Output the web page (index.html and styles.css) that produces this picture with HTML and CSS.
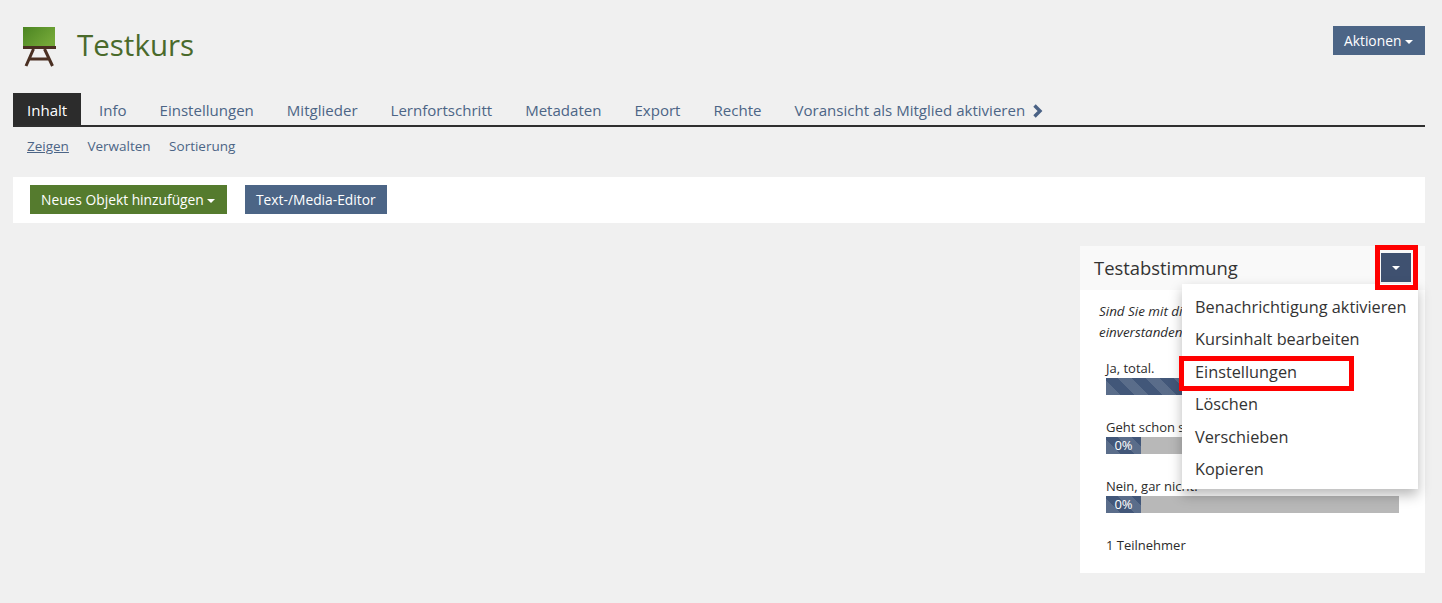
FILE: index.html
```html
<!DOCTYPE html>
<html lang="de">
<head>
<meta charset="utf-8">
<title>Testkurs</title>
<link rel="stylesheet" href="styles.css">
</head>
<body>
<div class="page">
  <header class="head">
    <div class="title-wrap">
      <svg class="course-icon" width="34" height="40" viewBox="0 0 34 40">
        <defs><linearGradient id="board" x1="0" y1="0" x2="1" y2="0.6"><stop offset="0" stop-color="#4b8422"/><stop offset="1" stop-color="#74a838"/></linearGradient></defs>
        <rect x="1" y="0" width="32" height="19" fill="url(#board)"/>
        <rect x="1" y="19" width="33" height="3" fill="#4a2f22"/>
        <path d="M11.500 22 L4 39 M22.500 22 L30.500 39 M7 32 H27" stroke="#4a2f22" stroke-width="3" fill="none"/>
      </svg>
      <h1 class="title">Testkurs</h1>
    </div>
    <a class="btn btn-blue btn-actions">Aktionen <span class="caret"></span></a>
  </header>

  <nav class="tabs">
    <a class="tab active">Inhalt</a>
    <a class="tab">Info</a>
    <a class="tab">Einstellungen</a>
    <a class="tab">Mitglieder</a>
    <a class="tab">Lernfortschritt</a>
    <a class="tab">Metadaten</a>
    <a class="tab">Export</a>
    <a class="tab">Rechte</a>
    <a class="tab">Voransicht als Mitglied aktivieren
      <svg class="chev" width="11" height="14" viewBox="0 0 11 14"><path d="M2.500 1.500 L8 7 L2.500 12.500" fill="none" stroke="#4a6285" stroke-width="3.400"/></svg>
    </a>
  </nav>
  <nav class="subtabs">
    <a class="sub current">Zeigen</a>
    <a class="sub">Verwalten</a>
    <a class="sub">Sortierung</a>
  </nav>

  <div class="toolbar">
    <a class="btn btn-green">Neues Objekt hinzufügen <span class="caret"></span></a>
    <a class="btn btn-blue">Text-/Media-Editor</a>
  </div>

  <div class="content">
    <section class="panel">
      <div class="panel-head">
        <h2 class="panel-title">Testabstimmung</h2>
        <a class="menu-toggle"><span class="caret"></span></a>
      </div>
      <div class="panel-body">
        <p class="question">Sind Sie mit diesem Kursinhalt<br>einverstanden?</p>
        <div class="answers">
          <div class="answer">
            <div class="answer-label">Ja, total.</div>
            <div class="bar"><div class="fill" style="width:100%">100%</div></div>
          </div>
          <div class="answer">
            <div class="answer-label">Geht schon so.</div>
            <div class="bar"><div class="fill" style="width:35px">0%</div></div>
          </div>
          <div class="answer">
            <div class="answer-label">Nein, gar nicht.</div>
            <div class="bar"><div class="fill" style="width:35px">0%</div></div>
          </div>
        </div>
        <p class="count">1 Teilnehmer</p>
      </div>
      <ul class="menu">
        <li>Benachrichtigung aktivieren</li>
        <li>Kursinhalt bearbeiten</li>
        <li>Einstellungen</li>
        <li>Löschen</li>
        <li>Verschieben</li>
        <li>Kopieren</li>
      </ul>
      <span class="mark mark-toggle"></span>
      <span class="mark mark-item"></span>
    </section>
  </div>
</div>
</body>
</html>
```
FILE: styles.css
```css
* { box-sizing: border-box; }
html, body { margin: 0; padding: 0; height: 100%; }
body {
  background: #f0f0f0;
  font-family: "Open Sans", "Noto Sans", sans-serif;
  color: #2b2b2b;
  overflow: hidden;
}
a { display: inline-block; }
.page { padding: 26px 17px 0 13px; }

.head { display: flex; justify-content: space-between; align-items: flex-start; height: 67px; }
.title-wrap { display: flex; align-items: center; padding: 1px 0 0 9px; height: 40px; }
.title { margin: 0 0 0 21px; font-size: 29.500px; font-weight: 400; color: #4a6a2b; line-height: 40px; position: relative; top: -2px; }
.course-icon { display: block; }

.btn {
  height: 29px; line-height: 29px; font-size: 13.800px; color: #fff; padding: 0 11px;
  white-space: nowrap;
}
.btn-blue { background: #4c6586; }
.btn-green { background: #557b2e; width: 197px; }
.btn-actions { width: 92px; }
.caret {
  display: inline-block; width: 0; height: 0; vertical-align: middle;
  border-left: 4px solid transparent; border-right: 4px solid transparent; border-top: 4px solid #fff;
}

.tabs { display: flex; height: 34px; border-bottom: 2px solid #2f2f2f; }
.tab {
  height: 32px; line-height: 35px; font-size: 15.060px; color: #4c6586; padding: 0 13px; margin-right: 7px;
  white-space: nowrap;
}
.tab.active { background: #2c2c2c; color: #fff; margin-right: 5px; padding: 0 14px; width: 68px; }
.chev { vertical-align: -2px; margin-left: 3px; }

.subtabs { display: flex; gap: 18.500px; padding: 10px 0 0 14px; height: 50px; }
.sub { font-size: 13.500px; color: #4c6586; line-height: 19px; }
.sub.current { text-decoration: underline; }

.toolbar { display: flex; gap: 18px; background: #fff; height: 46px; padding: 8px 17px; }

.content { display: flex; justify-content: flex-end; padding-top: 23px; }
.panel { position: relative; width: 345px; height: 327px; background: #fff; }
.panel-head { position: relative; height: 44px; background: #f9f9f9; display: flex; align-items: center; padding: 0 14px; }
.panel-title { margin: 0; font-size: 18.400px; font-weight: 400; color: #333; line-height: 44px; }
.menu-toggle {
  position: absolute; right: 14px; top: 7px; width: 30px; height: 29px; background: #3f5170;
  display: flex; align-items: center; justify-content: center;
}
.mark { position: absolute; border: 5px solid #f00; pointer-events: none; }
.mark-toggle { left: 295px; top: -1px; width: 43px; height: 45px; }

.panel-body { padding: 11px 26px 0 26px; }
.question { margin: 0 0 0 -7px; font-size: 13.400px; font-style: italic; line-height: 21px; color: #2b2b2b; }
.answers { display: flex; flex-direction: column; gap: 25px; padding-top: 18px; }
.answer-label { font-size: 13px; line-height: 15px; margin-bottom: 2px; color: #2b2b2b; }
.bar { height: 17px; background: #b8b8b8; width: 293px; }
.fill {
  height: 17px; font-size: 13px; line-height: 17px; color: #fff; text-align: center; background-color: #425779;
  background-image: repeating-linear-gradient(45deg, rgba(255,255,255,.13) 0 10px, transparent 10px 20px);
}
.count { margin: 0; padding-top: 24px; font-size: 13px; line-height: 17px; }

.menu {
  position: absolute; left: 102px; top: 38px; width: 236px; height: 205px; margin: 0; padding: 7px 0 0 13px;
  list-style: none; background: #fff; box-shadow: 0 6px 12px rgba(0,0,0,.28);
}
.menu li { font-size: 16.300px; line-height: 32.400px; color: #333; white-space: nowrap; }
.mark-item { left: 99px; top: 110px; width: 175px; height: 35px; }
```
